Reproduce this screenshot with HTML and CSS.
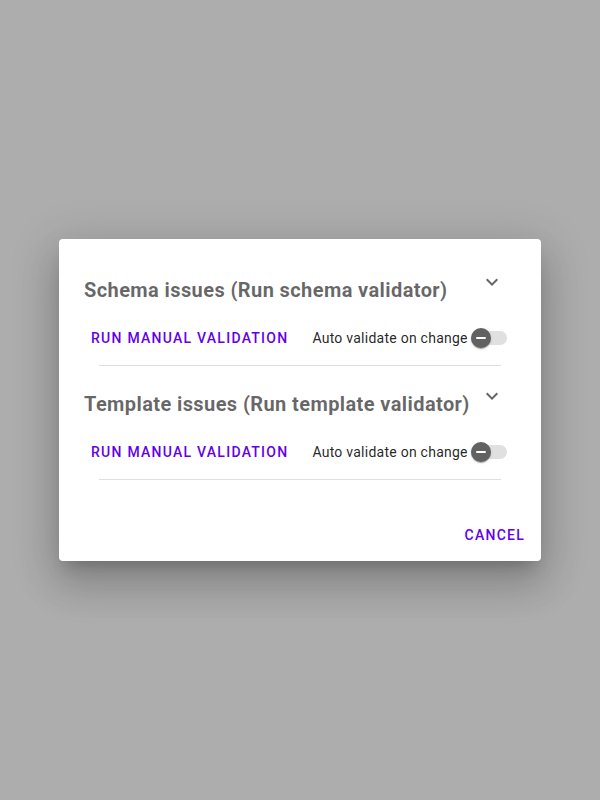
FILE: index.html
```html
<!DOCTYPE html>
<html>
<head>
<meta charset="utf-8">
<link rel="stylesheet" href="styles.css">
</head>
<body>
<div class="dialog">
  <div class="content">
    <section class="panel">
      <div class="panel-header">
        <h2 class="panel-title">Schema issues (Run schema validator)</h2>
        <svg class="chevron" viewBox="0 0 24 24" width="24" height="24"><path d="M16.59 8.59L12 13.17 7.41 8.59 6 10l6 6 6-6z"/></svg>
      </div>
      <div class="panel-row">
        <button class="text-btn">Run manual validation</button>
        <label class="switch-label">Auto validate on change
          <span class="switch"><span class="track"></span><span class="thumb"><span class="minus"></span></span></span>
        </label>
      </div>
      <div class="divider"></div>
    </section>
    <section class="panel">
      <div class="panel-header">
        <h2 class="panel-title">Template issues (Run template validator)</h2>
        <svg class="chevron" viewBox="0 0 24 24" width="24" height="24"><path d="M16.59 8.59L12 13.17 7.41 8.59 6 10l6 6 6-6z"/></svg>
      </div>
      <div class="panel-row">
        <button class="text-btn">Run manual validation</button>
        <label class="switch-label">Auto validate on change
          <span class="switch"><span class="track"></span><span class="thumb"><span class="minus"></span></span></span>
        </label>
      </div>
      <div class="divider"></div>
    </section>
  </div>
  <div class="actions">
    <button class="text-btn">Cancel</button>
  </div>
</div>
</body>
</html>
```
FILE: styles.css
```css
html, body {
  margin: 0;
  padding: 0;
}
body {
  background: #adadad;
  min-height: 100vh;
  display: flex;
  align-items: center;
  justify-content: center;
  font-family: Roboto, "Liberation Sans", sans-serif;
}
.dialog {
  width: 482px;
  background: #fff;
  border-radius: 4px;
  box-shadow: 0 11px 15px -7px rgba(0,0,0,.2), 0 24px 38px 3px rgba(0,0,0,.14), 0 9px 46px 8px rgba(0,0,0,.12);
  box-sizing: border-box;
}
.content {
  padding: 31px 24px 37px;
}
.panel + .panel {
  margin-top: 18px;
}
.panel-header {
  display: flex;
  justify-content: space-between;
  align-items: flex-start;
  padding-left: 1px;
  padding-right: 13px;
}
.panel-title {
  margin: 0;
  font-size: 20px;
  font-weight: 700;
  line-height: 40px;
  letter-spacing: 0.4px;
  color: rgba(0,0,0,0.6);
}
.chevron {
  fill: rgba(0,0,0,0.6);
  flex: none;
}
.panel-row {
  margin-top: 10px;
  height: 36px;
  display: flex;
  align-items: center;
}
.text-btn {
  border: none;
  background: none;
  height: 36px;
  padding: 0 8px;
  font-family: Roboto, "Liberation Sans", sans-serif;
  font-size: 14px;
  font-weight: 500;
  letter-spacing: 1.25px;
  text-transform: uppercase;
  color: #6200ee;
  cursor: pointer;
}
.switch-label {
  margin-left: 16px;
  display: flex;
  align-items: center;
  font-size: 14px;
  letter-spacing: 0.25px;
  color: rgba(0,0,0,0.87);
}
.switch {
  position: relative;
  width: 36px;
  height: 20px;
  margin-left: 3px;
  display: inline-block;
}
.track {
  position: absolute;
  left: 0;
  top: 3px;
  width: 36px;
  height: 14px;
  border-radius: 7px;
  background: #e0e0e0;
}
.thumb {
  position: absolute;
  left: 0;
  top: 0;
  width: 20px;
  height: 20px;
  border-radius: 50%;
  background: #616161;
  box-shadow: 0 2px 1px -1px rgba(0,0,0,.2), 0 1px 1px 0 rgba(0,0,0,.14), 0 1px 3px 0 rgba(0,0,0,.12);
  display: flex;
  align-items: center;
  justify-content: center;
}
.minus {
  width: 10px;
  height: 2px;
  background: #fff;
  border-radius: 1px;
}
.divider {
  margin: 9px 16px 0;
  height: 1px;
  background: #e0e0e0;
}
.actions {
  display: flex;
  justify-content: flex-end;
  padding: 0 8px 8px;
}
```
